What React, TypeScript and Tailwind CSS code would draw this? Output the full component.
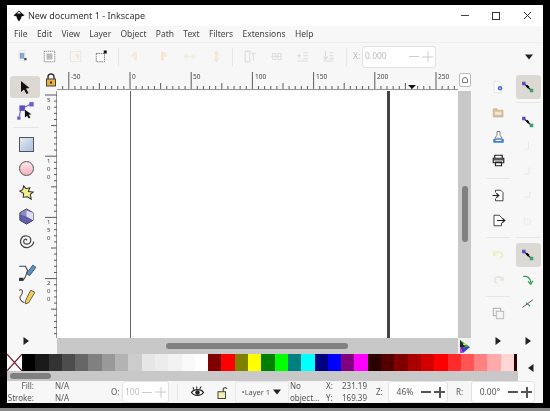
import React from "react";

const greys = ["#000000","#1a1a1a","#333333","#4d4d4d","#666666","#808080","#999999","#b3b3b3","#cccccc","#e6e6e6","#ececec","#f2f2f2","#f9f9f9","#ffffff"];
const colors = ["#800000","#ff0000","#808000","#ffff00","#008000","#00ff00","#008080","#00ffff","#000080","#0000ff","#800080","#ff00ff","#2b0000","#550000","#800000","#aa0000","#d40000","#ff0000","#ff2a2a","#ff5555","#ff8080","#ffaaaa","#ffd5d5"];

const I = ({ s = 20, children }: { s?: number; children: React.ReactNode }) => (
  <svg width={s} height={s} viewBox="0 0 20 20" fill="none">{children}</svg>
);

const Tri = ({ dir = "r" }: { dir?: "r" | "d" | "l" }) => (
  <svg width="10" height="10" viewBox="0 0 10 10">
    <path d={dir === "r" ? "M2.5 1 L8 5 L2.5 9Z" : dir === "l" ? "M7.5 1 L2 5 L7.5 9Z" : "M1 2.5 L9 2.5 L5 7.5Z"} fill="#222" />
  </svg>
);

const Node = () => (
  <I s={14}>
    <path d="M4 5 L15 15" stroke="#222" strokeWidth="1.8" />
    <rect x="1.5" y="2.5" width="5" height="5" fill="#5b4fc0" />
    <rect x="12.5" y="12.5" width="5" height="5" fill="#3f9f70" />
    <path d="M8 8 L11 11" stroke="#000" strokeWidth="3" />
  </I>
);

const Faint = ({ kind }: { kind: number }) => (
  <I s={15}>
    {kind === 0 && <path d="M12 4 L7 4 L4 10 L8 10 L8 15 L12 15Z" fill="#f3ecdd" />}
    {kind === 1 && <path d="M8 4 L13 4 L16 10 L12 10 L12 15 L8 15Z" fill="#f6e6d2" />}
    {kind === 2 && <path d="M2 10 L7 6 L7 9 L13 9 L13 6 L18 10 L13 14 L13 11 L7 11 L7 14Z" fill="#f3ecdd" />}
    {kind === 3 && <path d="M10 2 L14 7 L11.5 7 L11.5 13 L14 13 L10 18 L6 13 L8.5 13 L8.5 7 L6 7Z" fill="#f4e6cf" />}
    {kind === 4 && <path d="M3 3 H9 V17 H3Z M11 6 H17 M14 6 V16" stroke="#e0e0e0" strokeWidth="1.8" />}
    {kind === 5 && <path d="M3 10 H17 M5 6 H9 V14 H5Z M12 6 H16 V14 H12Z" stroke="#e0e0e0" strokeWidth="1.6" />}
    {kind === 6 && <path d="M3 9 H8 M5.5 6 V12 M11 5 H17 M11 9 H17 M11 13 H17 M3 16 H17" stroke="#dcdcdc" strokeWidth="1.6" />}
    {kind === 7 && <path d="M6 3 V13 M3 10 L6 14 L9 10 M11 5 H17 M11 9 H17 M11 13 H17 M3 16 H17" stroke="#dcdcdc" strokeWidth="1.6" />}
  </I>
);

const Sep = ({ w = "w-6" }: { w?: string }) => <div className={`${w} h-px bg-[#e6e6e6]`} />;

const Spin = ({ value, w, big, color }: { value: string; w: string; big?: boolean; color?: string }) => (
  <div className={`${w} h-[22px] flex items-center border border-[#e2e2e2] rounded-[3px] bg-white text-[8.5px]`}>
    <span className={`flex-1 ${big ? "text-center" : "pl-[2px]"}`} style={{ color: color ?? "#555" }}>{value}</span>
    <span className={`w-[10px] ${big ? "h-[2px] bg-[#555]" : "h-px bg-[#ccc]"}`} />
    <span className="relative w-[11px] h-[11px] ml-[3px] mr-[2px]">
      <span className={`absolute left-0 right-0 top-1/2 -translate-y-1/2 ${big ? "h-[2px] bg-[#555]" : "h-px bg-[#ccc]"}`} />
      <span className={`absolute top-0 bottom-0 left-1/2 -translate-x-1/2 ${big ? "w-[2px] bg-[#555]" : "w-px bg-[#ccc]"}`} />
    </span>
  </div>
);

const HRuler = () => {
  const u = 6.12;
  const x0 = 73;
  const ticks = [];
  for (let i = -11; i < 56; i++) {
    const x = x0 + i * u;
    if (x < 0 || x > 401) continue;
    const m = ((i % 10) + 10) % 10;
    const h = m === 0 ? 17 : m === 5 ? 6 : 3;
    ticks.push(<path key={i} d={`M${x} 19 V${19 - h}`} stroke="#333" strokeWidth="0.8" />);
  }
  const labels = [[-50, 12], [0, 73], [50, 134], [100, 196], [150, 257], [200, 318], [250, 379]];
  return (
    <svg width="401" height="21" viewBox="0 0 401 21">
      {ticks}
      <path d="M0 19.5 H401" stroke="#555" strokeWidth="0.6" />
      {labels.map(([t, x]) => (
        <text key={t} x={x + 2} y="9" fontSize="6.5" fill="#444" fontFamily="'Noto Sans', sans-serif">{t}</text>
      ))}
      <path d="M351 15 L359 15 L355 19Z" fill="#111" />
    </svg>
  );
};

const VRuler = () => {
  const u = 6.12;
  const y0 = 4;
  const ticks = [];
  for (let i = 0; i < 45; i++) {
    const y = y0 + i * u;
    if (y > 247) continue;
    const h = i % 10 === 0 ? 12 : i % 10 === 5 ? 6 : 3;
    ticks.push(<path key={i} d={`M12 ${y} H${12 - h}`} stroke="#333" strokeWidth="0.8" />);
  }
  const labels: [string, number][] = [["50", 4], ["100", 65], ["150", 126], ["200", 187]];
  return (
    <svg width="12" height="247" viewBox="0 0 12 247">
      {ticks}
      <path d="M11.5 0 V247" stroke="#555" strokeWidth="0.6" />
      {labels.map(([t, y]) =>
        t.split("").map((d, k) => (
          <text key={t + k} x="2" y={y + 7 + k * 8} fontSize="6" fill="#444" fontFamily="'Noto Sans', sans-serif">{d}</text>
        ))
      )}
    </svg>
  );
};

export default function App() {
  const cmd = "flex items-center justify-center h-[25px]";
  return (
    <div className="w-[550px] h-[411px] bg-black flex flex-col overflow-hidden blur-[0.5px] text-[8.5px] text-[#444]" style={{ fontFamily: "'Noto Sans', 'Liberation Sans', sans-serif" }}>
      <div className="mx-[7px] mt-[5px] h-[398px] bg-[#f7f7f7] flex flex-col">
        {/* title bar */}
        <div className="h-[21px] bg-white flex items-center shrink-0">
          <div className="ml-[6px] mr-[3px] flex">
            <svg width="12" height="12" viewBox="0 0 12 12">
              <path d="M6 0.5 L11.5 5.5 L8.5 6.5 L8 8.5 L6 11.5 L4 8.5 L3.5 6.5 L0.5 5.5Z" fill="#111" />
              <path d="M6 1.5 L8 3.5 L4 3.5Z" fill="#fff" />
            </svg>
          </div>
          <span className="text-[9px] text-[#333]">New document 1 - Inkscape</span>
          <div className="ml-auto flex items-center text-[#333]">
            <span className="w-[8px] h-px bg-[#444] mr-[23px]" />
            <span className="w-[8px] h-[8px] border border-[#333] mr-[23px]" />
            <svg width="9" height="9" viewBox="0 0 9 9" className="mr-[11px]"><path d="M1 1 L8 8 M8 1 L1 8" stroke="#333" strokeWidth="1" /></svg>
          </div>
        </div>
        {/* menu */}
        <div className="h-[17px] flex items-center shrink-0 pl-[7px] gap-[9.3px] text-[8.5px] text-[#444] border-b border-[#eeeeee]">
          {["File", "Edit", "View", "Layer", "Object", "Path", "Text", "Filters", "Extensions", "Help"].map((m) => (
            <span key={m}>{m}</span>
          ))}
        </div>
        {/* toolbar */}
        <div className="h-[27px] flex items-center shrink-0 pl-[3px]">
          <div className="w-[26px] flex justify-center">
            <I s={15}><path d="M4 2 H12 V15 H4Z" fill="#fff" stroke="#ddd" /><rect x="5" y="5" width="6" height="8" fill="#8aa6c8" /><rect x="11" y="12" width="3" height="3" fill="#444" /></I>
          </div>
          <div className="w-[26px] flex justify-center">
            <I s={15}><rect x="3" y="3" width="14" height="14" fill="#fff" stroke="#555" strokeDasharray="1.5 1" /><rect x="6" y="6" width="8" height="8" fill="#bbb" /></I>
          </div>
          <div className="w-[26px] flex justify-center">
            <I s={15}><rect x="3" y="3" width="14" height="14" fill="#f9f6ef" stroke="#e2e2e2" /><path d="M8 7 H15 V14Z" fill="#f1e9d8" /></I>
          </div>
          <div className="w-[26px] flex justify-center">
            <I s={15}><rect x="3" y="6" width="11" height="11" fill="#fff" stroke="#555" strokeDasharray="2 1" /><rect x="13" y="2" width="4" height="4" fill="#111" /></I>
          </div>
          <div className="w-px h-[18px] bg-[#e6e6e6] ml-[4px] mr-[2.5px]" />
          <div className="flex">
            {[0, 1, 2, 3].map((k) => <div key={k} className="w-[27px] flex justify-center"><Faint kind={k} /></div>)}
          </div>
          <div className="w-px h-[18px] bg-[#e6e6e6] ml-[2.5px] mr-[4px]" />
          <div className="flex">
            {[4, 5, 6, 7].map((k) => <div key={k} className="w-[26px] flex justify-center"><Faint kind={k} /></div>)}
          </div>
          <div className="w-px h-[18px] bg-[#e6e6e6] ml-[5px] mr-[6px]" />
          <span className="text-[#bbb] w-[9px]">X:</span>
          <Spin value="0.000" w="w-[74px]" color="#bbb" />
          <div className="ml-auto mr-[9px] flex"><Tri dir="d" /></div>
        </div>
        {/* main */}
        <div className="h-[284px] flex shrink-0">
          {/* tools */}
          <div className="w-[38px] shrink-0 flex flex-col items-center pt-[6px]">
            <div className="w-[30px] h-[22px] rounded-[3px] bg-[#dcd9d5] flex items-center justify-center -ml-[2px]">
              <svg width="12" height="15" viewBox="0 0 12 15"><path d="M2 1 L2 12 L5 9.5 L7.5 14 L9.5 13 L7 8.5 L10.5 8Z" fill="#111" /></svg>
            </div>
            <div className="h-[24px] mt-[2px] flex items-center justify-center">
              <I s={22}><path d="M6 7 L14 3 M5 8 L4 14" stroke="#6a5fd0" strokeWidth="1" /><rect x="4" y="4" width="5" height="5" fill="#5a4fc8" /><rect x="13" y="1" width="4" height="4" fill="#6a5fd0" /><rect x="2" y="14" width="3" height="3" fill="#6a5fd0" /><path d="M9 8 L9 15 L11 13.5 L12.5 16 L14 15 L12.5 12.5 L15 12Z" fill="#111" /></I>
            </div>
            <div className="w-[26px] mt-[3px] mb-[4px]"><Sep w="w-[26px]" /></div>
            <div className="h-[24px] flex items-center">
              <div className="w-[15px] h-[15px] border border-[#555] bg-gradient-to-br from-[#e4eaf2] to-[#a9c0dd]" />
            </div>
            <div className="h-[24px] flex items-center">
              <div className="w-[15px] h-[15px] border border-[#555] rounded-full bg-gradient-to-b from-[#fbe5e8] to-[#f2b3bd]" />
            </div>
            <div className="h-[24px] flex items-center">
              <I s={19}><path d="M7 3 L9.5 6 L13.5 5 L12 9 L17 9.5 L14 12 L15 17 L11 14.5 L6.5 15 L7 11 L3 8.5 L6 7Z" fill="#f5ee8c" stroke="#333" strokeWidth="1.1" /></I>
            </div>
            <div className="h-[24px] flex items-center">
              <I s={19}><path d="M10 2 L17 6 V14 L10 18 L3 14 V6Z" fill="#8c8acb" stroke="#444" /><path d="M10 10 L17 14 L10 18 L3 14 V8Z" fill="#3d3a92" opacity=".55" /><path d="M10 10 L17 14 L17 6 L10 4Z" fill="#dcdcf2" /></I>
            </div>
            <div className="h-[24px] flex items-center">
              <I s={19}><path d="M10 10 C11 8 7 8 7 11 C7 15 14 15 14.5 10 C15 5 7 3 4.5 8 C2 13 6 18 11 17.5 C15 17 17.5 14 17.5 11" stroke="#444" strokeWidth="1.3" /></I>
            </div>
            <div className="h-[21px] mt-[10px] flex items-center">
              <I s={21}><path d="M3 4 H9 L11 8 L9 14 L7 17 H3" stroke="#444" strokeWidth="1" /><path d="M10 11 L16 3 L19 5 L13 13Z" fill="#5a93c8" stroke="#333" strokeWidth=".7" /><rect x="3" y="15" width="4" height="3" fill="#333" /></I>
            </div>
            <div className="h-[23px] mt-[2px] flex items-center">
              <I s={21}><path d="M3 4 C7 2 7 7 4 10 C3 12 5 15 8 16" stroke="#444" strokeWidth="1" /><path d="M9 14 L14 4 L18 6 L12 16 L9 17Z" fill="#f3cf55" stroke="#333" strokeWidth=".7" /></I>
            </div>
            <div className="mt-auto mb-[8px]"><Tri /></div>
          </div>
          {/* centre */}
          <div className="w-[426px] shrink-0 flex flex-col">
            <div className="h-[21px] flex shrink-0">
              <div className="w-[12px] flex justify-center pt-[3px]">
                <svg width="12" height="14" viewBox="0 0 12 14"><path d="M3 6 V4 A3 3 0 0 1 9 4 V6" stroke="#333" strokeWidth="1.4" fill="none" /><rect x="1.5" y="6" width="9" height="7" fill="#e8b23c" stroke="#333" strokeWidth=".9" /><rect x="5" y="8.5" width="2" height="2" fill="#333" /></svg>
              </div>
              <HRuler />
              <div className="w-[13px] flex justify-center pt-[3px]">
                <div className="w-[12px] h-[14px] border border-[#bbb] rounded-[2px] bg-white flex items-center justify-center">
                  <span className="w-[6px] h-[6px] border border-[#777] rounded-t-[3px]" />
                </div>
              </div>
            </div>
            <div className="h-[247px] flex shrink-0">
              <VRuler />
              <div className="w-[401px] bg-white relative shrink-0">
                <div className="absolute left-[73px] top-0 bottom-0 w-px bg-[#666]" />
                <div className="absolute left-[329.5px] top-0 bottom-0 w-[3px] bg-[#444]" />
              </div>
              <div className="w-[13px] bg-[#c8c8c8] flex flex-col items-center pt-[95px]">
                <div className="w-[6px] h-[56px] rounded-[3px] bg-[#808080]" />
              </div>
            </div>
            <div className="h-[16px] flex shrink-0">
              <div className="w-[12px]" />
              <div className="w-[401px] bg-[#c8c8c8] flex items-center pl-[109px]">
                <div className="w-[182px] h-[6px] rounded-[3px] bg-[#808080]" />
              </div>
              <div className="w-[13px] flex items-center justify-center bg-[#f0f0f0]">
                <svg width="13" height="15" viewBox="0 0 13 15">
                  <path d="M2 1 L12 8 L2 8Z" fill="#1aa34a" /><path d="M2 1 L7 8 L2 8Z" fill="#222" /><path d="M2 8 L12 8 L5 14Z" fill="#2c3fd8" /><path d="M2 8 L5 14 L2 14Z" fill="#d92ec2" /><path d="M6 4 L9 6 L5 6Z" fill="#e8e23a" /><path d="M5 8 L8 8 L6 10Z" fill="#e33" />
                </svg>
              </div>
            </div>
          </div>
          {/* command bar */}
          <div className="w-[40px] shrink-0 flex flex-col items-center pt-[5px] pl-[14px]">
            <div className={cmd}>
              <I s={15}><path d="M4 2 H11 L14 5 V17 H4Z" fill="#fff" stroke="#ddd" /><circle cx="12" cy="11" r="3" fill="#4468c8" /><circle cx="12" cy="11" r="1" fill="#fff" /></I>
            </div>
            <div className={cmd}>
              <I s={15}><path d="M3 5 H8 L9 7 H16 V16 H3Z" fill="#d8bf9a" stroke="#c9b18e" /><rect x="5" y="9" width="9" height="4" fill="#efe6d6" /></I>
            </div>
            <div className={cmd}>
              <I s={15}><path d="M8 2 H12 V7 L15 11 H5 L8 7Z" fill="#fff" stroke="#555" /><path d="M3 12 H17 V17 H3Z" fill="#3f7fd0" /><rect x="6" y="13" width="8" height="1.5" fill="#fff" /></I>
            </div>
            <div className={`${cmd} -mt-[2px]`}>
              <I s={15}><path d="M5 7 V3 H15 V7 M3 7 H17 V13 H3Z M6 12 H14 V17 H6Z" stroke="#222" strokeWidth="1.6" fill="#fff" /><rect x="4" y="8" width="12" height="2" fill="#555" /></I>
            </div>
            <div className="mt-[5px] mb-[4px]"><Sep /></div>
            <div className={cmd}>
              <I s={15}><path d="M6 6 V3 H13 L16 6 V17 H6 V14" stroke="#222" strokeWidth="1.1" fill="#fff" /><path d="M2 10 H10 M7 7 L10.5 10 L7 13" stroke="#222" strokeWidth="1.4" /></I>
            </div>
            <div className={cmd}>
              <I s={15}><path d="M14 7 V6 L11 3 H4 V17 H14 V13" stroke="#222" strokeWidth="1.1" fill="#fff" /><path d="M8 10 H18 M15 7 L18.5 10 L15 13" stroke="#222" strokeWidth="1.4" /></I>
            </div>
            <div className="mt-[4px] mb-[5px]"><Sep /></div>
            <div className={cmd}>
              <I s={15}><path d="M4 9 C6 4 13 4 15 8 C16 11 14 13 12 13" stroke="#efeeb8" strokeWidth="2.4" /><path d="M3 5 L4 10 L8 9" stroke="#efeeb8" strokeWidth="1.6" /></I>
            </div>
            <div className={cmd}>
              <I s={15}><path d="M16 9 C14 4 7 4 5 8 C4 11 6 13 8 13" stroke="#dfe8dc" strokeWidth="2.4" /><path d="M17 5 L16 10 L12 9" stroke="#dfe8dc" strokeWidth="1.6" /></I>
            </div>
            <div className="mt-[3px] mb-[4px]"><Sep /></div>
            <div className={cmd}>
              <I s={15}><rect x="3" y="3" width="10" height="10" fill="#f4f4f4" stroke="#999" /><rect x="7" y="7" width="10" height="10" fill="#f4f4f4" stroke="#aaa" /></I>
            </div>
            <div className="mt-auto mb-[8px]"><Tri /></div>
          </div>
          {/* snap bar */}
          <div className="w-[32px] shrink-0 flex flex-col items-center pt-[5px] pl-[2px]">
            <div className="w-[25px] h-[24px] rounded-[3px] bg-[#dcd9d5] flex items-center justify-center"><Node /></div>
            <div className="mt-[3px] mb-[6px]"><Sep /></div>
            <div className="h-[25px] flex items-center justify-center"><Node /></div>
            <div className="h-[25px] flex items-center justify-center"><I s={13}><path d="M10 3 V14 H4" stroke="#e8e8e8" strokeWidth="1.5" /></I></div>
            <div className="h-[25px] flex items-center justify-center"><I s={13}><path d="M11 2 V14 H3" stroke="#e8e8e8" strokeWidth="1.5" /></I></div>
            <div className="h-[25px] flex items-center justify-center"><I s={13}><path d="M12 3 V11 H3" stroke="#e8e8e8" strokeWidth="1.5" /></I></div>
            <div className="h-[25px] flex items-center justify-center"><I s={13}><rect x="4" y="6" width="9" height="8" stroke="#e8e8e8" /></I></div>
            <div className="mt-[3px] mb-[5px]"><Sep /></div>
            <div className="w-[25px] h-[24px] rounded-[3px] bg-[#dcd9d5] flex items-center justify-center"><Node /></div>
            <div className="h-[25px] flex items-center justify-center"><I s={14}><path d="M3 5 C9 4 14 7 14 14" stroke="#2a9a50" strokeWidth="1.8" /><path d="M10 12 L14 16 L17 11" stroke="#2a9a50" strokeWidth="1.8" /></I></div>
            <div className="h-[24px] flex items-center justify-center"><I s={14}><path d="M2 15 L17 4" stroke="#555" strokeWidth="1.4" /><path d="M7 8 L13 13" stroke="#2a8a60" strokeWidth="1.6" /></I></div>
            <div className="mt-auto mb-[8px]"><Tri /></div>
          </div>
        </div>
        {/* palette */}
        <div className="h-[27px] flex shrink-0">
          <div className="w-[511px] shrink-0 flex flex-col">
            <div className="h-[17px] flex shrink-0">
              <div className="w-[15px] bg-white">
                <svg width="15" height="17" viewBox="0 0 15 17"><path d="M0 0 L15 17 M15 0 L0 17" stroke="#7a2030" strokeWidth="1.2" /></svg>
              </div>
              {greys.concat(colors).map((c, i) => (
                <div key={i} className="w-[13.3px] shrink-0" style={{ background: c }} />
              ))}
              <div className="w-[3.5px] shrink-0 bg-[#2b0000]" />
            </div>
            <div className="h-[10px] bg-[#c8c8c8] flex items-center pl-[3px]">
              <div className="w-[41px] h-[6px] rounded-[3px] bg-[#808080]" />
            </div>
          </div>
          <div className="flex-1 flex items-end justify-center pb-[8px]"><Tri dir="l" /></div>
        </div>
        {/* status */}
        <div className="flex-1 flex items-center text-[8px] leading-[12px] text-[#555] min-h-0 overflow-hidden">
          <div className="w-[27px] text-right">
            <div>Fill:</div>
            <div>Stroke:</div>
          </div>
          <div className="ml-[21px] w-[56px]">
            <div>N/A</div>
            <div>N/A</div>
          </div>
          <span className="w-[11px]">O:</span>
          <Spin value="100" w="w-[47px]" color="#bbb" />
          <div className="w-[16px] flex justify-center"><span className="w-px h-[16px] bg-[#e6e6e6]" /></div>
          <div className="w-[25px] flex justify-center">
            <I s={15}><path d="M2 10 C5 5 15 5 18 10 C15 15 5 15 2 10Z" fill="#fff" stroke="#222" strokeWidth="1.6" /><circle cx="10" cy="10" r="3" fill="#222" /><path d="M5 6 L4 3 M9 5 V2 M13 5 L15 2" stroke="#222" strokeWidth="1.4" /></I>
          </div>
          <div className="w-[25px] flex justify-center">
            <I s={15}><path d="M11 9 V5 A3 3 0 0 1 16 5" stroke="#333" strokeWidth="1.4" /><rect x="4" y="9" width="10" height="9" fill="#f6f0b0" stroke="#333" strokeWidth="1.2" /></I>
          </div>
          <div className="w-[54px] h-[22px] border border-[#e8e8e8] rounded-[2px] flex items-center justify-center gap-[2px] text-[7.5px]">
            <span>•Layer 1</span><Tri dir="d" />
          </div>
          <div className="w-[30px] pl-[1px]">
            <div>No</div>
            <div className="whitespace-nowrap">object...</div>
          </div>
          <div className="w-[16px] ml-[7px]">
            <div>X:</div>
            <div>Y:</div>
          </div>
          <div className="w-[28px]">
            <div>231.19</div>
            <div>169.39</div>
          </div>
          <span className="w-[12px] ml-[6px]">Z:</span>
          <Spin value="46%" w="w-[60px]" big />
          <span className="w-[23px] text-center">R:</span>
          <Spin value="0.00°" w="w-[64px]" big />
        </div>
      </div>
      <div className="h-[5px] shrink-0" />
      <div className="h-[3px] bg-[#8a8a8a] shrink-0" />
    </div>
  );
}
